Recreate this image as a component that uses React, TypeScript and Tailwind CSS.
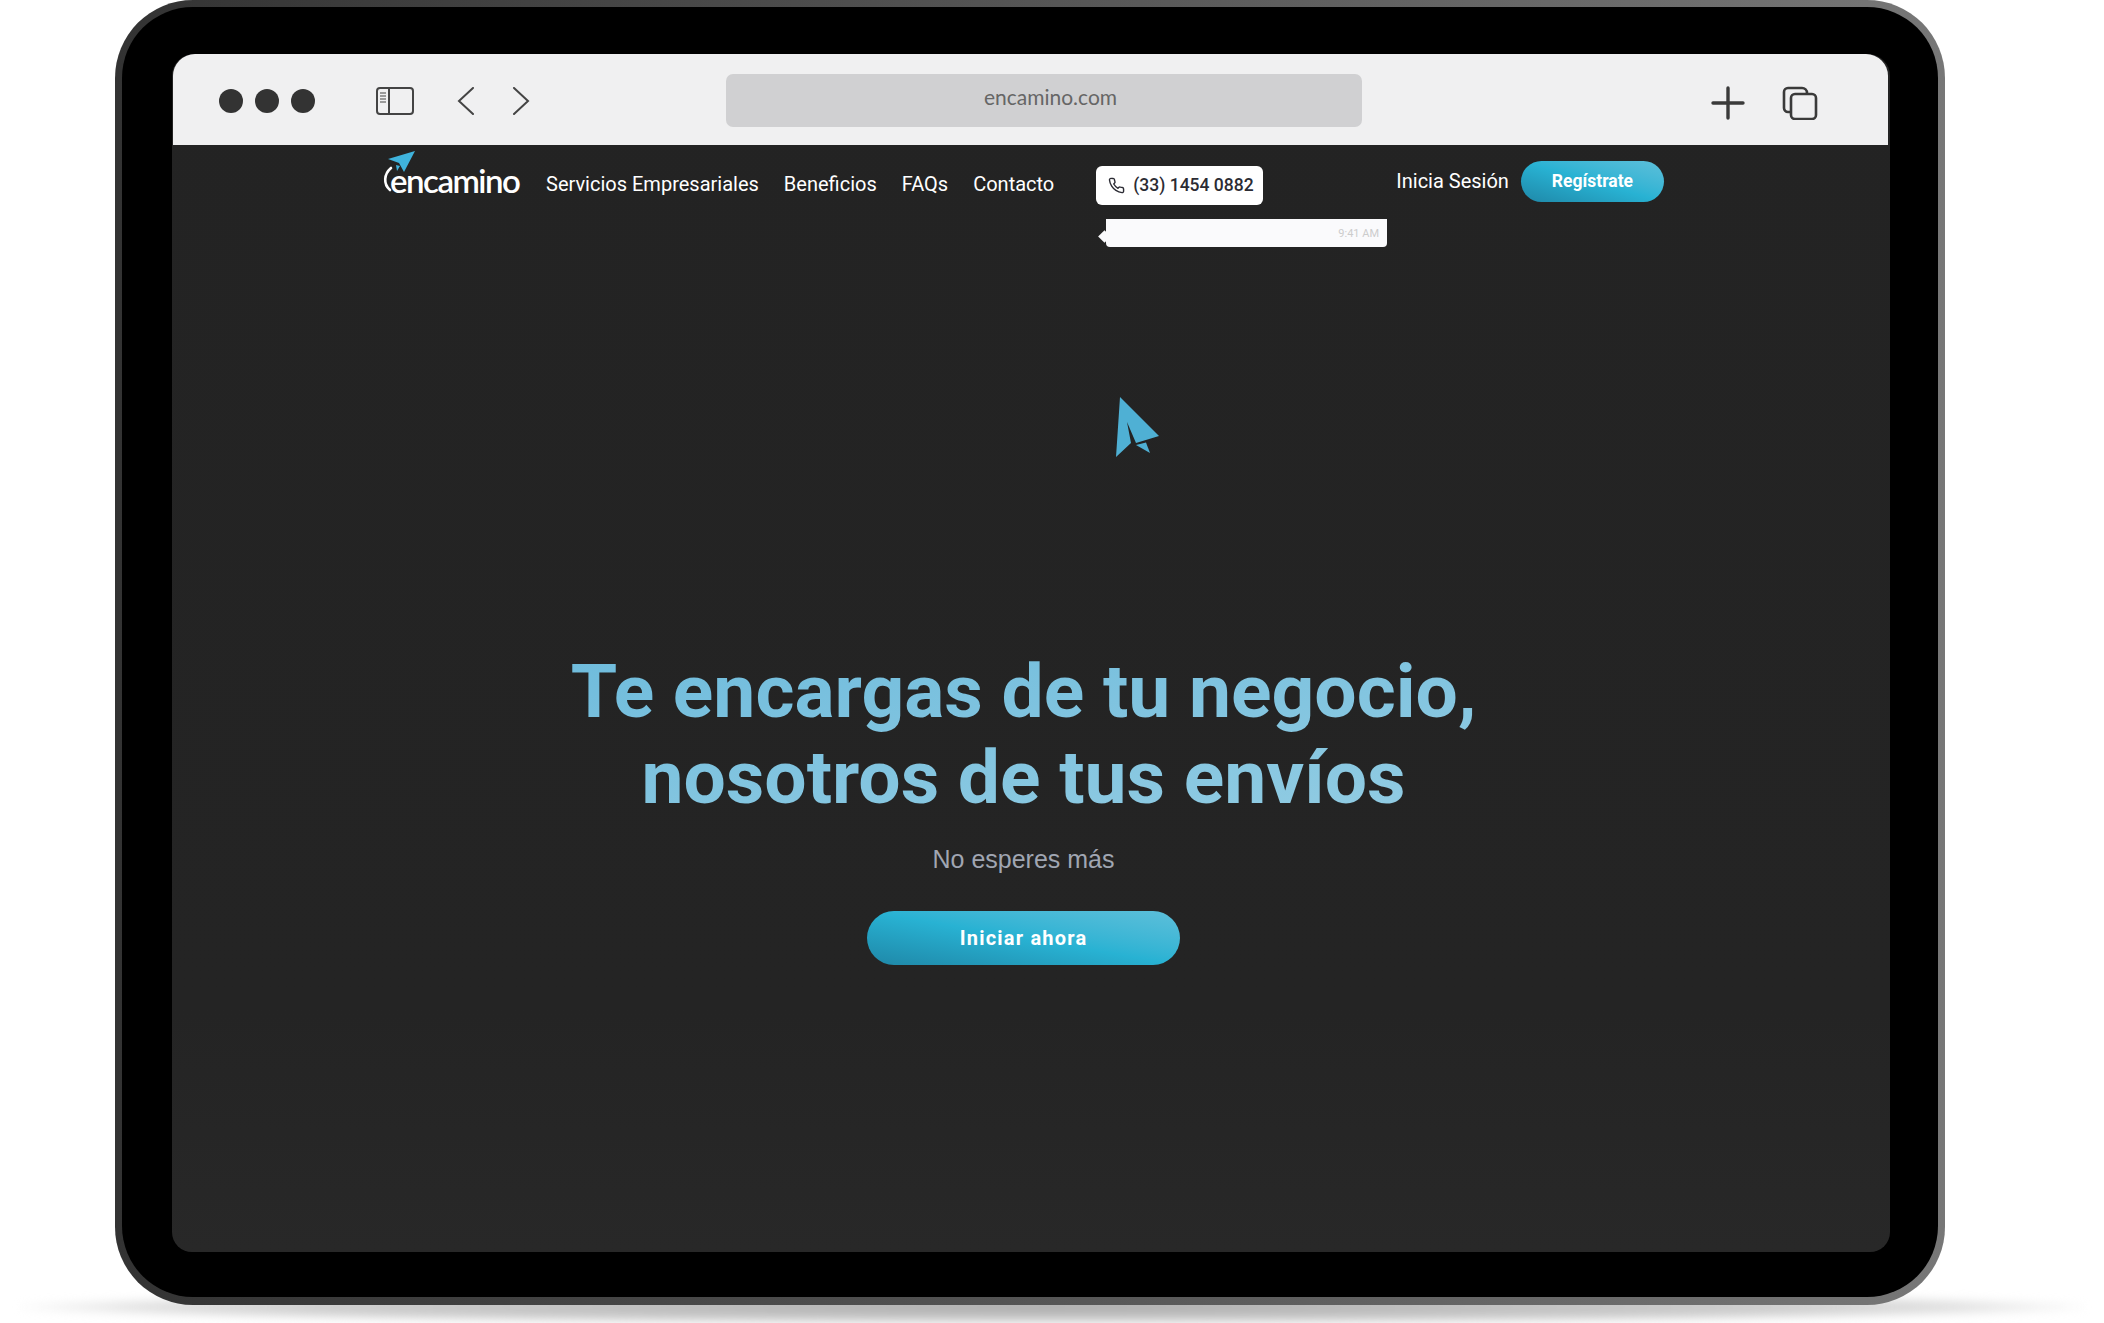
import React from "react";

const navLinks = ["Servicios Empresariales", "Beneficios", "FAQs", "Contacto"];

// paper plane in the middle of the hero
const PlaneIcon = ({ className }: { className?: string }) => (
  <svg viewBox="0 0 44 62" className={className}>
    <path d="M5 0 L44 39 L21 46 L12 25 L16 46 L1 60 Z" fill="#4fb0d4" />
    <path d="M21 48 L31 45.5 L35 56 Z" fill="#4fb0d4" />
  </svg>
);

const Logo = () => (
  <div className="relative w-[137px] h-[50px] shrink-0">
    <svg viewBox="0 0 40 46" className="absolute left-0 top-0 w-[40px] h-[46px]">
      <path d="M5 9 L32 1 L21 22 L16 13 Z" fill="#3fb3dc" />
      <path d="M13 15 L17 16 L14 21 Z" fill="#3fb3dc" />
      <path d="M8 18 C1 24 0 34 7 40" fill="none" stroke="#fff" strokeWidth="2.6" strokeLinecap="round" />
    </svg>
    <span className="absolute left-[7px] top-[10px] text-[33px] leading-[40px] font-semibold tracking-[-1.5px] text-white font-['Lato',sans-serif]">
      encamino
    </span>
  </div>
);

const BrowserBar = () => (
  <div className="h-[91px] ml-px mr-[2px] pt-[2px] flex items-center bg-[#f0f0f1] rounded-t-[22px] text-[#3a3a3a]">
    <div className="flex gap-[12px] ml-[46px]">
      <div className="w-[24px] h-[24px] rounded-full bg-[#333]" />
      <div className="w-[24px] h-[24px] rounded-full bg-[#333]" />
      <div className="w-[24px] h-[24px] rounded-full bg-[#333]" />
    </div>
    <svg viewBox="0 0 38 28" className="ml-[61px] w-[38px] h-[28px]" fill="none" stroke="#444" strokeWidth="2">
      <rect x="1" y="1" width="36" height="26" rx="3" />
      <path d="M13 1 V27" />
      <path d="M4 6 H10 M4 9 H10 M4 12 H10 M4 15 H10" strokeWidth="1.2" />
    </svg>
    <svg viewBox="0 0 18 28" className="ml-[43px] w-[18px] h-[28px]" fill="none" stroke="#444" strokeWidth="2" strokeLinecap="round">
      <path d="M16 1 L2 14 L16 27" />
    </svg>
    <svg viewBox="0 0 18 28" className="ml-[37px] w-[18px] h-[28px]" fill="none" stroke="#444" strokeWidth="2" strokeLinecap="round">
      <path d="M2 1 L16 14 L2 27" />
    </svg>
    <div className="ml-[196px] w-[636px] h-[53px] rounded-[7px] bg-[#d0d0d2] flex items-center justify-center pl-[13px] pb-[7px] text-[21px] text-[#666] font-['Lato',sans-serif]">
      encamino.com
    </div>
    <svg viewBox="0 0 34 34" className="ml-[349px] mt-[4px] w-[34px] h-[34px]" fill="none" stroke="#3a3a3a" strokeWidth="3.4" strokeLinecap="round">
      <path d="M17 2 V32 M2 17 H32" />
    </svg>
    <svg viewBox="0 0 36 34" className="ml-[37px] mt-[4px] w-[36px] h-[34px]" fill="none" stroke="#3a3a3a" strokeWidth="2.6">
      <path d="M8 26 H6 A4 4 0 0 1 2 22 V6 A4 4 0 0 1 6 2 H20 A5 5 0 0 1 25 7" />
      <rect x="9" y="8" width="25" height="25" rx="4" />
    </svg>
  </div>
);

const Nav = () => (
  <div className="flex items-start pl-[211px] font-['Roboto',sans-serif]">
    <div className="mt-[5px]">
      <Logo />
    </div>
    <nav className="flex gap-[25px] ml-[26px] mt-[26px] text-[20px] leading-[26px] text-white">
      {navLinks.map((l) => (
        <a key={l}>{l}</a>
      ))}
    </nav>
    <div className="ml-[42px] mt-[21px] w-[167px] h-[39px] rounded-[6px] bg-white flex items-center pl-[12px] gap-[8px] text-[17.5px] font-medium text-[#2b2b33]">
      <svg viewBox="0 0 24 24" className="w-[17px] h-[17px]" fill="none" stroke="#2b2b33" strokeWidth="2" strokeLinecap="round" strokeLinejoin="round">
        <path d="M22 17v3a2 2 0 0 1-2.2 2 19.8 19.8 0 0 1-8.6-3.1 19.5 19.5 0 0 1-6-6A19.8 19.8 0 0 1 2.1 4.2 2 2 0 0 1 4.1 2h3a2 2 0 0 1 2 1.7c.1 1 .4 1.9.7 2.8a2 2 0 0 1-.5 2.1L8.1 9.9a16 16 0 0 0 6 6l1.3-1.3a2 2 0 0 1 2.1-.4c.9.3 1.8.6 2.8.7A2 2 0 0 1 22 17z" />
      </svg>
      (33) 1454 0882
    </div>
    <a className="ml-[133px] mt-[23px] text-[20px] leading-[26px] text-white">Inicia Sesión</a>
    <button className="ml-[12px] mt-[16px] w-[143px] h-[41px] rounded-full bg-linear-to-tr from-[#1f88a8] via-[#28b2d3] to-[#5cbfda] text-[17.5px] font-bold text-white">
      Regístrate
    </button>
  </div>
);

export default function App() {
  return (
    <div className="relative w-[2104px] h-[1323px] bg-white overflow-hidden">
      {/* soft shadow under the tablet */}
      <div className="absolute left-[20px] top-[1290px] w-[2064px] h-[34px] blur-[4px] bg-[radial-gradient(ellipse_at_center,#aaaaaa_0%,#cccccc_50%,#e0e0e0_62%,transparent_72%)]" />
      <div className="relative ml-[115px] w-[1830px] h-[1305px] p-[7px] pb-[8px] rounded-[78px] bg-linear-to-r from-[#333] via-[#555] to-[#777]">
        <div className="h-full rounded-[71px] bg-black pt-[47px] pl-[50px] pr-[48px]">
          <div className="h-[1198px] rounded-t-[22px] rounded-b-[20px] bg-linear-to-b from-[#232323] via-[#242424] via-80% to-[#282828] flex flex-col">
            <BrowserBar />
            <Nav />
            <div className="ml-[934px] mt-[14px] relative w-[281px] h-[28px] rounded-b-[4px] bg-[#fafafc] flex items-end justify-end pr-[8px] pb-[5px] text-[11px] text-[#ccc] font-['Roboto',sans-serif]">
              <div className="absolute left-[-6px] top-[13px] w-[9px] h-[9px] bg-[#fafafc] rotate-45" />
              9:41 AM
            </div>
            <PlaneIcon className="ml-[943px] mt-[150px] w-[44px] h-[62px]" />
            <div className="w-[1703px] mt-[189px] flex flex-col items-center font-['Roboto',sans-serif]">
              <h1 className="w-[1000px] text-center text-[75px] leading-[86px] font-bold bg-linear-to-br from-[#6dbbdc] to-[#94cde3] bg-clip-text text-transparent">
                Te encargas de tu negocio,
                <br />
                nosotros de tus envíos
              </h1>
              <p className="mt-[23px] text-[25px] leading-[32px] text-[#a0a6b2] font-['Liberation_Sans',sans-serif]">
                No esperes más
              </p>
              <button className="mt-[36px] w-[313px] h-[54px] rounded-full bg-linear-to-tr from-[#1f88a8] via-[#28b2d3] to-[#5cbfda] text-[20px] font-bold tracking-[1.2px] text-white">
                Iniciar ahora
              </button>
            </div>
          </div>
        </div>
      </div>
    </div>
  );
}
